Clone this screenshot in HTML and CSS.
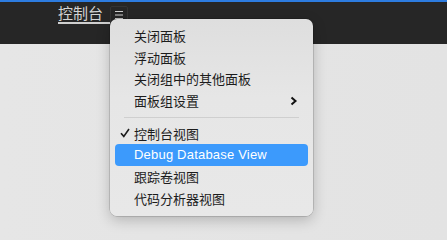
FILE: index.html
```html
<!DOCTYPE html>
<html>
<head>
<meta charset="utf-8">
<link rel="stylesheet" href="styles.css">
</head>
<body>
<div class="header">
  <div class="tab">控制台</div>
  <div class="menu-btn">
    <svg width="10" height="10" viewBox="0 0 10 10"><path d="M1 1.5h8M1 5h8M1 8.5h8" stroke="#cfcfcf" stroke-width="1.1"/></svg>
  </div>
</div>
<div class="content"></div>
<div class="menu">
  <div class="item">关闭面板</div>
  <div class="item">浮动面板</div>
  <div class="item">关闭组中的其他面板</div>
  <div class="item">面板组设置<span class="chev"><svg width="8" height="10" viewBox="0 0 8 10"><path d="M1.5 1.5L5.5 5L1.5 8.5" fill="none" stroke="#111" stroke-width="2"/></svg></span></div>
  <div class="sep"></div>
  <div class="item"><span class="check"><svg width="10" height="10" viewBox="0 0 10 10"><path d="M1 5.2L3.8 8.4L9 1" fill="none" stroke="#1c1c1c" stroke-width="1.6"/></svg></span>控制台视图</div>
  <div class="item active">Debug Database View</div>
  <div class="item">跟踪卷视图</div>
  <div class="item">代码分析器视图</div>
</div>
</body>
</html>
```
FILE: styles.css
```css
html, body {
  margin: 0;
  padding: 0;
}
body {
  width: 447px;
  height: 240px;
  background: #e4e4e4;
  font-family: "Noto Sans CJK SC", "Liberation Sans", sans-serif;
  overflow: hidden;
  position: relative;
}
.header {
  height: 42px;
  border-top: 2px solid #2d7ce0;
  background: #262626;
  display: flex;
  align-items: flex-start;
  padding-left: 58px;
}
.tab {
  color: #d4d4d4;
  font-size: 15px;
  line-height: 19px;
  margin-top: 1px;
  padding-right: 7px;
  border-bottom: 2px solid #cfcfcf;
}
.menu-btn {
  margin-top: 4px;
  width: 16px;
  height: 16px;
  border: 1px solid #343434;
  border-radius: 2px;
  display: flex;
  align-items: center;
  justify-content: center;
}
.content {
  height: 196px;
  background: linear-gradient(to right, #e6e6e6, #e3e3e3);
}
.menu {
  position: absolute;
  left: 110px;
  top: 19px;
  width: 203px;
  box-sizing: border-box;
  padding: 6px 5px;
  background: linear-gradient(to bottom, #dedede, #e6e6e6 40%, #e8e8e8);
  border-radius: 7px;
  box-shadow: 0 0 0 0.5px rgba(0,0,0,0.25), 0 4px 14px rgba(0,0,0,0.22);
}
.item {
  position: relative;
  height: 21.7px;
  line-height: 21.7px;
  padding-left: 19px;
  font-size: 13px;
  color: #1c1c1c;
  border-radius: 4px;
}
.item.active {
  background: #3c9afc;
  color: #ffffff;
  font-family: "Liberation Sans", sans-serif;
  letter-spacing: 0.2px;
}
.check {
  position: absolute;
  left: 5px;
  top: 5px;
  line-height: 0;
}
.chev {
  position: absolute;
  right: 10px;
  top: 6px;
  line-height: 0;
}
.sep {
  height: 1px;
  background: #cfcfcf;
  margin: 5px 9px 5px 9px;
}
```
